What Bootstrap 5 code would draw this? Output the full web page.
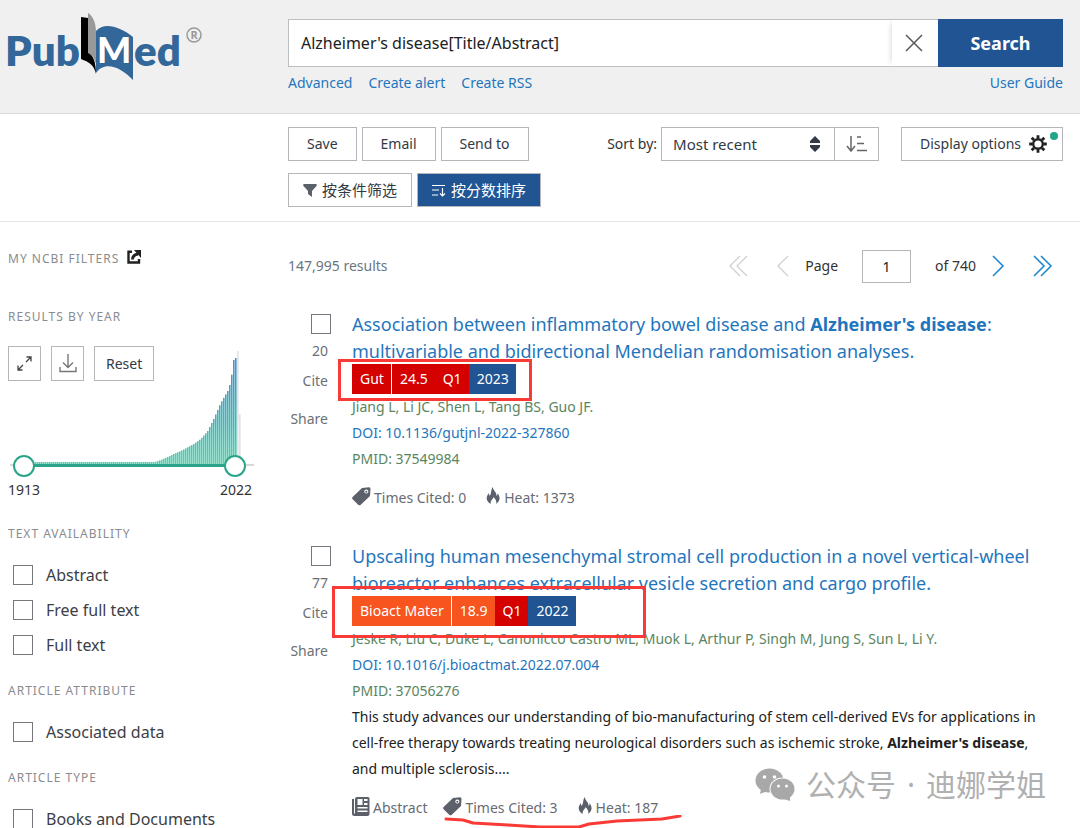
<!DOCTYPE html>
<html lang="en">
<head>
<meta charset="utf-8">
<meta name="viewport" content="width=device-width, initial-scale=1">
<title>Alzheimer's disease[Title/Abstract] - PubMed</title>
<link href="https://cdn.jsdelivr.net/npm/bootstrap@5.3.0/dist/css/bootstrap.min.css" rel="stylesheet">
<style>
  body { font-family: "Noto Sans", "Noto Sans CJK SC", sans-serif; font-size: 14px; line-height: 26px; color: #333; background: #fff; }
  a { color: #1f76bd; text-decoration: none; }
  svg { display: block; flex: none; }
  .split { display: grid; grid-template-columns: 280px minmax(0, 1fr); padding: 0 17px 0 8px; }
  .masthead { background: #f0f0f0; border-bottom: 1px solid #dadada; height: 114px; padding-top: 19px; }
  .logo { margin: -9px 0 0 -4px; }
  .query { height: 48px; border: 1px solid #bcbec0; background: #fff; }
  .query .form-control { font-size: 16px; padding: 0 12px; border: 0; background: none; color: #212121; box-shadow: none; }
  .clear-btn { flex: none; width: 47px; padding: 0 4px 0 0; border: 0; border-radius: 0; box-shadow: -4px 0 5px -3px #ddd; }
  .search-btn { width: 125px; margin: -1px; background: #205493; color: #fff; font-size: 18px; font-weight: 700; border: 0; border-radius: 0; }
  .quick { gap: 16px; margin-top: 3px; }
  .tools { border-bottom: 1px solid #e4e4e6; padding-top: 13px; padding-bottom: 14px; }
  .btn-row { gap: 5px; }
  .tool { height: 34px; padding: 0 18px; border: 1px solid #b4b6b9; border-radius: 0; font-size: 14px; color: #323a45; background: #fff; display: inline-flex; align-items: center; justify-content: center; }
  .tool.zh { padding: 0 14px; font-size: 15px; gap: 5px; }
  .tool.solid { background: #205493; color: #fff; }
  .tool.options { margin-left: 22px; padding-right: 15px; }
  .tool.reset { padding: 0 11px; }
  .sorter { width: 174px; }
  .sorter .form-select { height: 34px; border: 1px solid #b4b6b9; border-radius: 0; padding: 0 11px; font-size: 15px; color: #323a45; background: #fff; }
  .sorter svg { position: absolute; right: 14px; top: 9px; pointer-events: none; }
  .order-btn { width: 45px; margin-left: -1px; padding: 0; }
  .dot { position: absolute; right: 4px; top: 4px; width: 8px; height: 8px; border-radius: 50%; background: #20a58a; }
  .side h2 { font-size: 12px; font-weight: 400; line-height: 18px; letter-spacing: 1px; color: #8a8c90; margin: 0; }
  .stack { display: grid; width: 256px; margin: 20px 0 0 -8px; }
  .stack > * { grid-area: 1 / 1; }
  .stack .btn-row { gap: 10px; }
  .stack .tool { height: 35px; }
  .stack .sq { width: 33px; padding: 0; }
  .spans { position: relative; width: 233px; margin-left: 13px; height: 22px; align-self: end; }
  .spans input { position: absolute; inset: 0; width: 100%; height: 22px; margin: 0; appearance: none; background: none; pointer-events: none; }
  .spans input::-webkit-slider-thumb { appearance: none; width: 22px; height: 22px; border-radius: 50%; border: 2px solid #2aa58a; background: #fff; pointer-events: auto; }
  .years { width: 244px; margin-bottom: 22px; }
  .box { appearance: none; flex: none; width: 20px; height: 20px; margin: 0; border: 1px solid #74777b; background: #fff; border-radius: 0; }
  .box:checked { background: #205493; }
  .facets { margin: 14px 0 20px 5px; }
  .facet { gap: 13px; height: 35px; font-size: 16px; color: #3c4046; }
  .pager { height: 34px; margin: 27px 10px 28px 0; }
  .pager input { width: 49px; height: 33px; padding: 0; border: 1px solid #b4b6b9; border-radius: 0; font-size: 14px; text-align: center; color: #212121; }
  .plain { border: 0; background: none; padding: 0; }
  .hit { display: grid; grid-template-columns: 43px minmax(0, 1fr); column-gap: 21px; margin-bottom: 32px; }
  .hit-side { color: #6b7075; text-align: right; padding-top: 3px; }
  .hit-side .plain, .hit-side span { display: block; margin-left: auto; margin-right: 3px; color: #6b7075; }
  .hit h3 { font-size: 18px; line-height: 27px; font-weight: 400; margin: 0; }
  .marks { position: relative; margin-top: -1px; height: 30px; line-height: 30px; color: #fff; display: flex; }
  .marks span { padding: 0 7px 0 8px; }
  .red { background: #d50000; } .orange { background: #f75420; } .navy { background: #205493; }
  .cut { border-right: 1px solid #fff; }
  .frame { position: absolute; border: 3px solid #f93a37; }
  .frame-a { left: -14px; top: -5px; width: 194px; height: 42px; }
  .frame-b { left: -20px; top: -10px; width: 314px; height: 52px; }
  .authors { color: #5a8560; }
  .blurb { color: #212121; padding-right: 10px; margin: 0; }
  .stats { color: #676c73; margin-top: 13px; }
  .stats svg { margin-top: 2px; }
  .stats svg + span { margin-left: 3px; }
  .stats span + svg { margin-left: 16px; }
  .stats .flame { margin-left: 20px; }
  .stats .flame + span { margin-left: 4px; }
  .stats .scribble { position: absolute; left: 92px; top: 20px; margin: 0; }
  .watermark { position: absolute; right: 34px; top: 762px; font-size: 30px; line-height: 46px; color: #b0b0b0; gap: 11px; }
</style>
</head>
<body>
<div class="position-relative vh-100 overflow-hidden">
  <header class="masthead split">
    <a class="logo" href="#" aria-label="PubMed">
      <svg width="204" height="74" viewBox="4 10 204 74">
        <g font-family="Lato" font-weight="800" font-size="42" fill="#336699">
          <text x="5" y="66">Pub</text><text x="134" y="66">ed</text>
        </g>
        <path d="M81 17l7 1v34c5 3 8 10 8 22-2-9-7-12-15-15z" fill="#000"/>
        <path d="M88 13c5 3 8 10 8 19v32c-2-6-4-9-8-11z" fill="#999"/>
        <path d="M96 31c8-9 23-5 37 6v43c-13-14-29-19-37-7z" fill="#336699"/>
        <text x="97" y="63" font-family="Lato" font-weight="900" font-size="36" fill="#fff">M</text>
        <circle cx="194" cy="35" r="7" fill="none" stroke="#999" stroke-width="1.5"/>
        <text x="190.500" y="39" font-family="Open Sans" font-weight="700" font-size="11" fill="#999">R</text>
      </svg>
    </a>
    <div>
      <form class="query d-flex">
        <input class="form-control" type="text" aria-label="Search PubMed" value="Alzheimer's disease[Title/Abstract]">
        <button class="btn clear-btn d-flex align-items-center justify-content-center" type="button" aria-label="Clear">
          <svg width="18" height="18" stroke="#55585c" stroke-width="1.500"><path d="M1 1l16 16M17 1L1 17"/></svg>
        </button>
        <button class="btn search-btn flex-shrink-0" type="button">Search</button>
      </form>
      <nav class="quick d-flex"><a href="#">Advanced</a><a href="#">Create alert</a><a href="#">Create RSS</a><a class="ms-auto" href="#">User Guide</a></nav>
    </div>
  </header>

  <section class="tools split">
    <div></div>
    <div>
      <div class="d-flex align-items-center">
        <div class="btn-row d-flex"><button class="tool">Save</button><button class="tool">Email</button><button class="tool">Send to</button></div>
        <label class="ms-auto me-1" for="sort">Sort by:</label>
        <div class="sorter position-relative">
          <select id="sort" class="form-select"><option>Most recent</option><option>Best match</option></select>
          <svg width="12" height="16" fill="#323a45"><path d="M6 0l5 5v2H1V5zM1 9h10v2l-5 5-5-5z"/></svg>
        </div>
        <button class="tool order-btn" aria-label="Sort order">
          <svg width="22" height="18" fill="none" stroke="#666"><path stroke-width="1.500" d="M5 1v14M1 11l4 5 4-5"/><path stroke-width="1.500" d="M11 2h4M11 8.500h7M11 15.500h10"/></svg>
        </button>
        <button class="tool options position-relative">Display options
          <svg class="ms-2" width="18" height="18" viewBox="-9 -9 18 18" fill="none" stroke="#212121"><circle r="4.800" stroke-width="2.400"/><path stroke-width="2.800" d="M0-5.500V-8.800M0 5.500V8.800M5.500 0H8.800M-5.500 0H-8.800M4-4l2.300-2.300M-4 4l-2.300 2.300M4 4l2.300 2.300M-4-4l-2.300-2.300"/></svg>
          <span class="dot"></span>
        </button>
      </div>
      <div class="btn-row d-flex mt-2 pt-1">
        <button class="tool zh"><svg width="14" height="13" fill="#5b606b"><path d="M1 0h12q1.500.5.500 2L9 7v6l-4-3V7L.5 2Q-.5.500 1 0z"/></svg>按条件筛选</button>
        <button class="tool zh solid"><svg width="14" height="13" fill="none" stroke="#fff" stroke-width="1.200"><path d="M0 1.500h13M0 6h7M0 11h6M10.500 4v8M8 9.500l2.500 2.500L13 9.500"/></svg>按分数排序</button>
      </div>
    </div>
  </section>

  <main class="split">
    <aside class="side">
      <h2 class="d-flex gap-2 mt-4 pt-1">MY NCBI FILTERS
        <svg width="14" height="14" fill="none" stroke="#212121"><path stroke-width="2.400" d="M5 1.800H1.500V12.500H12V9"/><path stroke-width="2.800" d="M5.500 9.500C5.500 6 8 4.500 11 4"/><path fill="#212121" stroke="none" d="M7 0h7v8z"/></svg>
      </h2>
      <h2 class="mt-4 pt-3">RESULTS BY YEAR</h2>
      <div class="stack">
        <div class="btn-row d-flex ps-2">
          <button class="tool sq" aria-label="Expand"><svg width="15" height="15" fill="none" stroke="#444" stroke-width="1.300"><path d="M9.500 1H14v4.500M14 1L9 6M5.500 14H1V9.500M1 14l5-5"/></svg></button>
          <button class="tool sq" aria-label="Download"><svg width="18" height="19" fill="none" stroke="#777" stroke-width="1.400"><path d="M9 0v13M4 8.500l5 5 5-5M1 13v4.500h16V13"/></svg></button>
          <button class="tool reset">Reset</button>
        </div>
        <svg id="histogram" class="mt-1" width="256" height="127" aria-label="Results by year">
          <defs><linearGradient id="tint" gradientUnits="userSpaceOnUse" x1="0" y1="8" x2="0" y2="114"><stop stop-color="#4c90c6"/><stop offset=".6" stop-color="#45b5b4"/><stop offset="1" stop-color="#58cfae"/></linearGradient></defs>
          <path d="M10 115h244" stroke="#d8d8d8" stroke-width="2"/>
          <path d="M24 115.500h211" stroke="#2aa58a" stroke-width="3"/>
        </svg>
        <div class="spans">
          <input type="range" min="1913" max="2022" value="1913" aria-label="From year"><input type="range" min="1913" max="2022" value="2022" aria-label="To year">
        </div>
      </div>
      <div class="years d-flex justify-content-between"><span>1913</span><span>2022</span></div>
      <h2>TEXT AVAILABILITY</h2>
      <div class="facets">
        <label class="facet d-flex align-items-center"><input class="box" type="checkbox">Abstract</label>
        <label class="facet d-flex align-items-center"><input class="box" type="checkbox">Free full text</label>
        <label class="facet d-flex align-items-center"><input class="box" type="checkbox">Full text</label>
      </div>
      <h2>ARTICLE ATTRIBUTE</h2>
      <div class="facets"><label class="facet d-flex align-items-center"><input class="box" type="checkbox">Associated data</label></div>
      <h2>ARTICLE TYPE</h2>
      <div class="facets"><label class="facet d-flex align-items-center"><input class="box" type="checkbox">Books and Documents</label></div>
    </aside>

    <div>
      <div class="pager d-flex align-items-center">
        <span class="text-secondary">147,995 results</span>
        <button class="plain ms-auto" aria-label="First page"><svg width="20" height="22" fill="none" stroke="#cfd1d4" stroke-width="1.400"><path d="M12 1L2 11l10 10M19 1L9 11l10 10"/></svg></button>
        <button class="plain ms-4 ps-1" aria-label="Previous page"><svg width="13" height="22" fill="none" stroke="#cfd1d4" stroke-width="1.400"><path d="M12 1L2 11l10 10"/></svg></button>
        <label class="ms-3" for="page">Page</label>
        <input class="ms-4" id="page" type="text" value="1">
        <span class="ms-4">of 740</span>
        <button class="plain ms-3" aria-label="Next page"><svg width="13" height="22" fill="none" stroke="#1f88cf" stroke-width="1.600"><path d="M1 1l10 10L1 21"/></svg></button>
        <button class="plain ms-4 ps-1" aria-label="Last page"><svg width="20" height="22" fill="none" stroke="#1f88cf" stroke-width="1.600"><path d="M1 1l10 10L1 21M8 1l10 10L8 21"/></svg></button>
      </div>

      <article class="hit">
        <div class="hit-side"><input class="box d-block ms-auto" type="checkbox" aria-label="Select result 20"><span class="mt-1">20</span><button class="plain mt-1">Cite</button><button class="plain mt-2 pt-1">Share</button></div>
        <div>
          <h3><a href="#">Association between inflammatory bowel disease and <b>Alzheimer's disease</b>: multivariable and bidirectional Mendelian randomisation analyses.</a></h3>
          <div class="marks"><span class="red cut">Gut</span><span class="red">24.5</span><span class="red">Q1</span><span class="navy">2023</span><i class="frame frame-a"></i></div>
          <div class="authors">Jiang L, Li JC, Shen L, Tang BS, Guo JF.</div>
          <div><a href="#">DOI: 10.1136/gutjnl-2022-327860</a></div>
          <div class="authors">PMID: 37549984</div>
          <div class="stats d-flex">
            <svg width="19" height="19" fill="#5b606b"><use href="#tag"/></svg><span>Times Cited: 0</span>
            <svg class="flame" width="14" height="18" fill="#5b606b"><use href="#fire"/></svg><span>Heat: 1373</span>
          </div>
        </div>
      </article>

      <article class="hit">
        <div class="hit-side"><input class="box d-block ms-auto" type="checkbox" aria-label="Select result 77"><span class="mt-1">77</span><button class="plain mt-1">Cite</button><button class="plain mt-2 pt-1">Share</button></div>
        <div>
          <h3><a href="#">Upscaling human mesenchymal stromal cell production in a novel vertical-wheel bioreactor enhances extracellular vesicle secretion and cargo profile.</a></h3>
          <div class="marks"><span class="orange cut">Bioact Mater</span><span class="orange">18.9</span><span class="red">Q1</span><span class="navy">2022</span><i class="frame frame-b"></i></div>
          <div class="authors">Jeske R, Liu C, Duke L, Canonicco Castro ML, Muok L, Arthur P, Singh M, Jung S, Sun L, Li Y.</div>
          <div><a href="#">DOI: 10.1016/j.bioactmat.2022.07.004</a></div>
          <div class="authors">PMID: 37056276</div>
          <p class="blurb">This study advances our understanding of bio-manufacturing of stem cell-derived EVs for applications in cell-free therapy towards treating neurological disorders such as ischemic stroke, <b>Alzheimer's disease</b>, and multiple sclerosis....</p>
          <div class="stats d-flex position-relative">
            <svg width="18" height="19" fill="#5b606b"><use href="#paper"/></svg><span>Abstract</span>
            <svg width="19" height="19" fill="#5b606b"><use href="#tag"/></svg><span>Times Cited: 3</span>
            <svg class="flame" width="14" height="18" fill="#5b606b"><use href="#fire"/></svg><span>Heat: 187</span>
            <svg class="scribble" width="240" height="14" fill="none" stroke="#f93a37" stroke-width="3" stroke-linecap="round" stroke-linejoin="round"><path d="M2 4l17 1 10 3 35 2 32 2h39l10-3 28-3 45-2 18-3"/></svg>
          </div>
        </div>
      </article>
    </div>
  </main>

  <div class="watermark d-flex align-items-center">
    <svg width="40" height="34" fill="#a8a8a8"><ellipse cx="14.500" cy="12.500" rx="14" ry="12"/><path d="M6 21l-1 5 7-3z"/><ellipse cx="27.500" cy="21" rx="13" ry="11.500" fill="#fff"/><ellipse cx="27.500" cy="21" rx="12" ry="10.500"/><path d="M29 31l6 2v-5z"/><g fill="#fff"><circle cx="9.500" cy="9" r="1.800"/><circle cx="19.500" cy="9" r="1.800"/><circle cx="23.500" cy="18" r="1.500"/><circle cx="31.500" cy="18" r="1.500"/></g></svg>
    <span>公众号</span><span>·</span><span>迪娜学姐</span>
  </div>

  <svg width="0" height="0" class="position-absolute">
    <symbol id="tag" viewBox="0 0 19 19"><path fill-rule="evenodd" d="M10 1l7-.7q1.500 0 1.500 1.500L18 9l-9.500 9q-1.200.8-2.300-.3L.6 12.200q-1-1.200 0-2.200zM14.300 2.600a2 2 0 1 0 .01 0zM14.300 3.800a.9.900 0 1 1-.01 0z"/></symbol>
    <symbol id="fire" viewBox="0 0 14 18"><path d="M7 0c-.5 3 4 5 3.500 9 1-.7 1.200-1.800 1-3 2.500 3.500 3.500 7.500-1.500 11 1-3-.5-5-2.500-7C7.500 12 4 13 4.800 17-1 14 .3 9 3 6c0 1.200 0 2 .7 2.800C6 6 4.300 3 7 0z"/></symbol>
    <symbol id="paper" viewBox="0 0 18 19"><path fill-rule="evenodd" d="M5 0h11q1.500 0 1.500 1.500v15.500q0 2-2 2H2.500q-2.500 0-2.500-2.500V2h2v14.500h1V2q0-2 2-2zM5.500 2v6h5V2zM12 2v2h3.500V2zM12 6v2h3.500V6zM5.500 10v1.500h10V10zM5.500 13.500V15h10v-1.500z"/></symbol>
  </svg>
</div>
<script src="https://cdn.jsdelivr.net/npm/bootstrap@5.3.0/dist/js/bootstrap.bundle.min.js"></script>
<script>
  // Bar heights between the listed [x, height] points are interpolated.
  const shape = [[35, 2], [154, 2], [160, 4], [167, 7], [173, 10], [182, 14], [193, 20], [200, 25], [207, 33], [213, 45], [220, 61], [227, 73], [230, 82], [233, 104], [236, 107]];
  const chart = document.getElementById('histogram');
  const bar = (x, h, fill) => {
    const r = document.createElementNS('http://www.w3.org/2000/svg', 'rect');
    Object.entries({ x, y: 114 - h, width: 1.6, height: h, fill }).forEach(([k, v]) => r.setAttribute(k, v));
    chart.insertBefore(r, chart.querySelector(':scope > path'));
  };
  for (let x = 35; x <= 236; x += 2) {
    const i = Math.max(1, shape.findIndex(p => p[0] >= x));
    const [a, b] = [shape[i - 1], shape[i]];
    bar(x, a[1] + (b[1] - a[1]) * (x - a[0]) / (b[0] - a[0]), 'url(#tint)');
  }
  bar(237, 113, '#e2e2e4');
  bar(239, 50, '#e2e2e4');
</script>
</body>
</html>
